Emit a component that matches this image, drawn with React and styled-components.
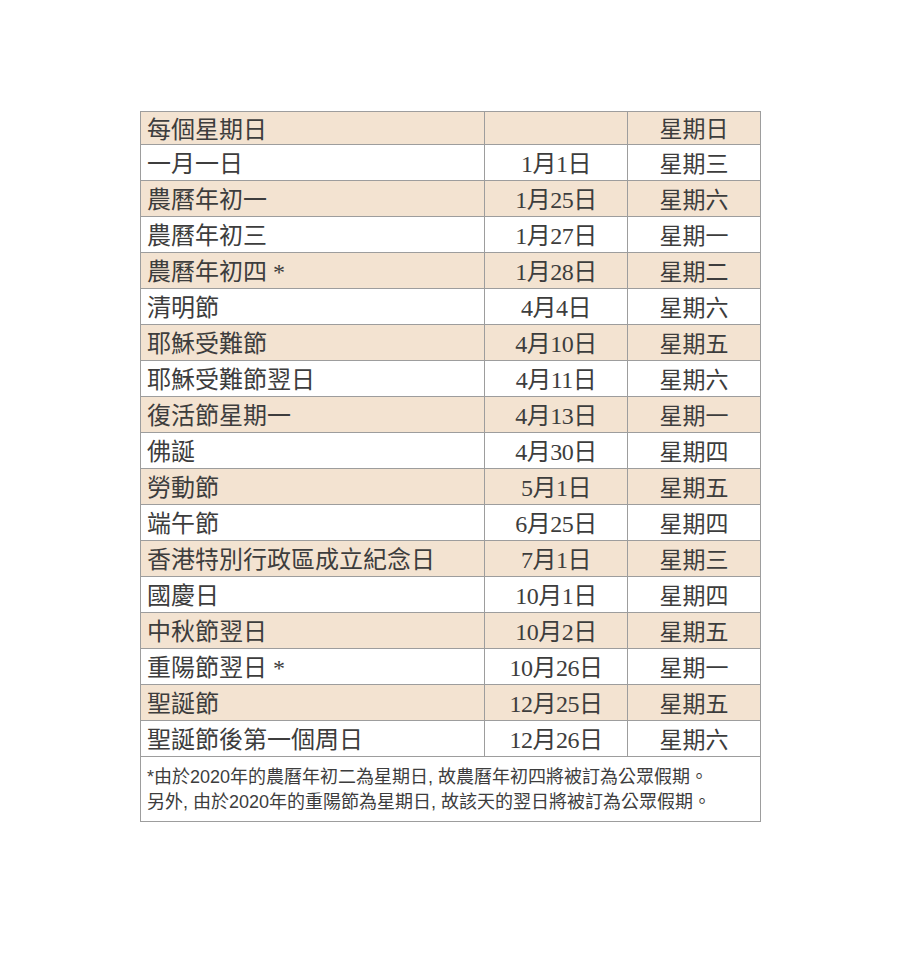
import styled, { createGlobalStyle } from 'styled-components';

const GlobalStyle = createGlobalStyle`
	html, body {
		margin: 0;
		padding: 0;
		background: #ffffff;
	}
`;

const holidays = [
	{ name: '一月一日', date: '1月1日', day: '星期三' },
	{ name: '農曆年初一', date: '1月25日', day: '星期六' },
	{ name: '農曆年初三', date: '1月27日', day: '星期一' },
	{ name: '農曆年初四 *', date: '1月28日', day: '星期二' },
	{ name: '清明節', date: '4月4日', day: '星期六' },
	{ name: '耶穌受難節', date: '4月10日', day: '星期五' },
	{ name: '耶穌受難節翌日', date: '4月11日', day: '星期六' },
	{ name: '復活節星期一', date: '4月13日', day: '星期一' },
	{ name: '佛誕', date: '4月30日', day: '星期四' },
	{ name: '勞動節', date: '5月1日', day: '星期五' },
	{ name: '端午節', date: '6月25日', day: '星期四' },
	{ name: '香港特別行政區成立紀念日', date: '7月1日', day: '星期三' },
	{ name: '國慶日', date: '10月1日', day: '星期四' },
	{ name: '中秋節翌日', date: '10月2日', day: '星期五' },
	{ name: '重陽節翌日 *', date: '10月26日', day: '星期一' },
	{ name: '聖誕節', date: '12月25日', day: '星期五' },
	{ name: '聖誕節後第一個周日', date: '12月26日', day: '星期六' },
];

const Page = styled.div`
	padding: 111px 0 0 140px;
`;

const Table = styled.table`
	border-collapse: collapse;
	width: 620px;
	table-layout: fixed;
	color: #3d3d3d;
	font-family: 'Liberation Serif', 'Noto Sans CJK TC', serif;
`;

const Row = styled.tr`
	height: ${({ $height }) => $height}px;
	background: ${({ $shaded }) => ($shaded ? '#f3e3d1' : '#ffffff')};
`;

const Cell = styled.td`
	border: 1px solid #9d9d9d;
	padding: 3px 6px 0 6px;
	font-size: ${({ $size }) => $size || 24}px;
	text-align: ${({ $align }) => $align || 'left'};
	white-space: nowrap;
	line-height: 1;
	letter-spacing: ${({ $tight }) => ($tight ? '-0.5px' : '0')};
`;

const NoteCell = styled.td`
	border: 1px solid #9d9d9d;
	padding: 8px 6px 6px 6px;
	font-family: 'Liberation Sans Narrow', 'Liberation Sans', 'Noto Sans CJK TC', sans-serif;
	font-size: 18px;
	line-height: 25px;
	color: #3d3d3d;
	vertical-align: top;
	white-space: nowrap;
`;

export default function App() {
	return (
		<>
			<GlobalStyle />
			<Page>
				<Table>
					<colgroup>
						<col style={{ width: '344px' }} />
						<col style={{ width: '143px' }} />
						<col style={{ width: '133px' }} />
					</colgroup>
					<tbody>
						<Row $shaded $height={33}>
							<Cell>每個星期日</Cell>
							<Cell $align='center'></Cell>
							<Cell $align='center' $size={23}>星期日</Cell>
						</Row>
						{holidays.map((h, i) => (
							<Row key={h.name} $shaded={i % 2 === 1} $height={36}>
								<Cell>{h.name}</Cell>
								<Cell $align='center' $tight>
									{h.date}
								</Cell>
								<Cell $align='center' $size={23}>{h.day}</Cell>
							</Row>
						))}
						<tr>
							<NoteCell colSpan={3}>
								*由於2020年的農曆年初二為星期日, 故農曆年初四將被訂為公眾假期。
								<br />
								另外, 由於2020年的重陽節為星期日, 故該天的翌日將被訂為公眾假期。
							</NoteCell>
						</tr>
					</tbody>
				</Table>
			</Page>
		</>
	);
}
